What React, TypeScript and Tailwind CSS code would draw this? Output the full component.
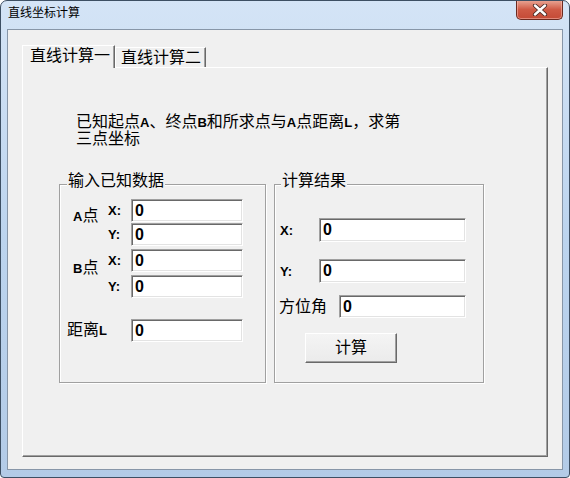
import React from "react";

const FONT = "font-['Liberation_Sans','Noto_Sans_CJK_SC',sans-serif]";

function Field({ w, h = 23 }: { w: number; h?: number }) {
  return (
    <div
      style={{ width: w, height: h }}
      className="bg-white border border-t-[#a0a0a0] border-l-[#a0a0a0] border-b-white border-r-white shadow-[inset_1px_1px_0_#696969,inset_-1px_-1px_0_#e3e3e3] pl-[3px] flex items-center text-[16px] leading-[16px] font-bold font-['Liberation_Sans',sans-serif] text-black"
    >
      0
    </div>
  );
}

function XY({ label }: { label: string }) {
  return (
    <span className="w-[23px] text-[13px] font-bold font-['Liberation_Sans',sans-serif] leading-[13px]">{label}</span>
  );
}

export default function App() {
  return (
    <div className={`${FONT} w-[570px] h-[478px] rounded-t-[7px] rounded-b-[4px] border border-[#3d4f63] bg-gradient-to-b from-[#d4e4f6] via-[#bcd4ee] to-[#b3cbe7] flex flex-col px-[6px] pb-[7px] text-black overflow-hidden`}>
      {/* title bar */}
      <div className="h-[28px] flex items-start justify-between">
        <span className="pt-[5px] pl-px text-[12px] leading-[14px] text-black">直线坐标计算</span>
        <div className="-mt-px w-[47px] h-[20px] rounded-b-[5px] border border-t-0 border-[#6b2a20] bg-gradient-to-b from-[#e9a898] via-[#cf5a45] to-[#c44a36] shadow-[inset_0_0_0_1px_rgba(255,200,190,0.5)] flex items-center justify-center">
          <svg width="16" height="12" viewBox="0 0 16 12">
            <path d="M3 1.5 L13 10.5 M13 1.5 L3 10.5" stroke="#4a2a26" strokeWidth="4.2" strokeLinecap="round" />
            <path d="M3 1.5 L13 10.5 M13 1.5 L3 10.5" stroke="#ffffff" strokeWidth="2.4" strokeLinecap="round" />
          </svg>
        </div>
      </div>

      {/* client area */}
      <div className="flex-1 border border-[#8796a8] bg-[#f0f0f0] flex flex-col pt-[15px] px-[14px] pb-[12px]">
        {/* tabs */}
        <div className="h-[22px] flex items-start">
          <div className="relative z-10 h-[23px] w-[93px] bg-[#f0f0f0] border-t border-l border-white border-r border-r-[#696969] shadow-[inset_-1px_0_0_#a0a0a0] pl-[7px] pt-[2px] text-[16px] leading-[16px]">
            直线计算一
          </div>
          <div className="mt-[2px] h-[20px] w-[91px] border-t border-l border-white border-r border-r-[#696969] shadow-[inset_-1px_0_0_#a0a0a0] pl-[5px] pt-[2px] text-[16px] leading-[16px]">
            直线计算二
          </div>
        </div>

        {/* panel */}
        <div className="flex-1 border border-t-white border-l-white border-r-[#696969] border-b-[#696969] shadow-[inset_-1px_-1px_0_#a0a0a0] pl-[36px] pt-[46px]">
          <div className="ml-[17px] text-[16px] leading-[16px]">
            <div>
              已知起点<b className="text-[13px] font-bold">A</b>、终点<b className="text-[13px] font-bold">B</b>和所求点与<b className="text-[13px] font-bold">A</b>点距离<b className="text-[13px] font-bold">L</b>，求第
            </div>
            <div>三点坐标</div>
          </div>

          <div className="mt-[37px] flex gap-[8px]">
            {/* group 1 */}
            <div className="relative w-[207px] h-[199px] border border-[#a0a0a0] shadow-[inset_1px_1px_0_#fff,1px_1px_0_#fff] pt-[14px]">
              <span className="absolute left-[7px] top-[-12px] px-px bg-[#f0f0f0] text-[16px] leading-[16px]">输入已知数据</span>

              <div className="flex items-center pl-[13px]">
                <span className="w-[35px] mb-[12px] text-[16px] leading-[16px]">
                  <b className="text-[13px]">A</b>点
                </span>
                <div className="flex flex-col gap-px">
                  <div className="flex items-center"><XY label="X:" /><Field w={112} /></div>
                  <div className="flex items-center"><XY label="Y:" /><Field w={112} /></div>
                </div>
              </div>

              <div className="mt-[3px] flex items-center pl-[13px]">
                <span className="w-[35px] mb-[10px] text-[16px] leading-[16px]">
                  <b className="text-[13px]">B</b>点
                </span>
                <div className="flex flex-col gap-[3px]">
                  <div className="flex items-center"><XY label="X:" /><Field w={112} /></div>
                  <div className="flex items-center"><XY label="Y:" /><Field w={112} /></div>
                </div>
              </div>

              <div className="mt-[21px] flex items-center pl-[7px]">
                <span className="w-[64px] text-[16px] leading-[16px]">
                  距离<b className="text-[13px]">L</b>
                </span>
                <Field w={112} />
              </div>
            </div>

            {/* group 2 */}
            <div className="relative w-[210px] h-[199px] border border-[#a0a0a0] shadow-[inset_1px_1px_0_#fff,1px_1px_0_#fff] pt-[33px]">
              <span className="absolute left-[6px] top-[-12px] px-px bg-[#f0f0f0] text-[16px] leading-[16px]">计算结果</span>

              <div className="flex items-center pl-[5px]">
                <span className="w-[39px] text-[13px] font-bold leading-[13px]">X:</span>
                <Field w={147} h={24} />
              </div>
              <div className="mt-[17px] flex items-center pl-[5px]">
                <span className="w-[39px] text-[13px] font-bold leading-[13px]">Y:</span>
                <Field w={147} h={24} />
              </div>
              <div className="mt-[12px] flex items-center pl-[4px]">
                <span className="w-[60px] text-[16px] leading-[16px]">方位角</span>
                <Field w={127} />
              </div>
              <div className="mt-[15px] ml-[30px] w-[92px] h-[30px] bg-gradient-to-b from-[#f4f4f4] to-[#ebebeb] border border-t-white border-l-white border-r-[#696969] border-b-[#696969] shadow-[inset_-1px_-1px_0_#a0a0a0] flex items-center justify-center text-[16px] leading-[16px]">
                计算
              </div>
            </div>
          </div>
        </div>
      </div>
    </div>
  );
}
